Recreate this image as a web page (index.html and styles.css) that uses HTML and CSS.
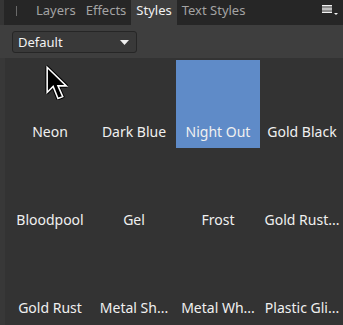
FILE: index.html
```html
<!DOCTYPE html>
<html>
<head>
<meta charset="utf-8">
<link rel="stylesheet" href="styles.css">
</head>
<body>
<div class="panel">
  <div class="tabbar">
    <span class="grip"></span>
    <span class="sep"></span>
    <div class="tabs">
      <span class="tab">Layers</span>
      <span class="tab">Effects</span>
      <span class="tab active">Styles</span>
      <span class="tab">Text Styles</span>
    </div>
    <svg class="menu" width="18" height="12" viewBox="0 0 18 12">
      <rect x="0" y="0" width="10" height="8" fill="#8a8a8a"/>
      <rect x="0" y="0" width="10" height="1" fill="#f2f2f2"/>
      <rect x="0" y="3.5" width="10" height="1" fill="#f2f2f2"/>
      <rect x="0" y="7" width="10" height="1" fill="#f2f2f2"/>
      <path d="M12 8 L16 8 L14 10 Z" fill="#f2f2f2"/>
    </svg>
  </div>
  <div class="toolbar">
    <div class="select">
      <span>Default</span>
      <svg width="9" height="5" viewBox="0 0 9 5"><path d="M0 0 L9 0 L4.5 5 Z" fill="#f0f0f0"/></svg>
    </div>
  </div>
  <div class="gridwrap">
    <div class="grid">
      <div class="cell"><span>Neon</span></div>
      <div class="cell"><span>Dark Blue</span></div>
      <div class="cell selected"><span>Night Out</span></div>
      <div class="cell"><span>Gold Black</span></div>
      <div class="cell"><span>Bloodpool</span></div>
      <div class="cell"><span>Gel</span></div>
      <div class="cell"><span>Frost</span></div>
      <div class="cell"><span>Gold Rust...</span></div>
      <div class="cell"><span>Gold Rust</span></div>
      <div class="cell"><span>Metal Sh...</span></div>
      <div class="cell"><span>Metal Wh...</span></div>
      <div class="cell"><span>Plastic Gli...</span></div>
    </div>
  </div>
  <svg class="cursor" width="24" height="35" viewBox="-1.8 -1.8 20 29">
    <path d="M0 0 L0 21 L5 16 L9 26 L13 24.5 L9 15.5 L16 15.5 Z" fill="none" stroke="#000" stroke-width="3" stroke-linejoin="round"/>
    <path d="M0 0 L0 21 L5 16 L9 26 L13 24.5 L9 15.5 L16 15.5 Z" fill="#000" stroke="#fff" stroke-width="1.3" stroke-linejoin="miter"/>
  </svg>
</div>
</body>
</html>
```

FILE: styles.css
```css
html, body {
  margin: 0;
  padding: 0;
  background: #333333;
  overflow: hidden;
}

.panel {
  position: relative;
  width: 343px;
  height: 325px;
  display: flex;
  flex-direction: column;
  font-family: "Noto Sans", "Open Sans", sans-serif;
  font-size: 13px;
  overflow: hidden;
}

.tabbar {
  height: 25px;
  flex: none;
  display: flex;
  align-items: stretch;
  background: #262626;
}

.grip {
  width: 4px;
  background: #353535;
}

.sep {
  width: 1px;
  height: 10px;
  margin: 6px 0 0 12px;
  background: #6a6a6a;
}

.tabs {
  display: flex;
  margin-left: 14px;
}

.tab {
  padding: 2px 5px 0;
  line-height: 16px;
  color: #a3a3a3;
}

.tab.active {
  background: #3e3e3e;
  color: #f2f2f2;
}

.menu {
  margin: 5px 3px 0 auto;
}

.toolbar {
  height: 33px;
  flex: none;
  background: #3e3e3e;
  display: flex;
  align-items: flex-start;
  padding: 6px 0 0 12px;
  box-sizing: border-box;
}

.select {
  width: 125px;
  height: 22px;
  box-sizing: border-box;
  border: 1px solid #262626;
  border-radius: 3px;
  background: #393939;
  display: flex;
  align-items: center;
  justify-content: space-between;
  padding: 0 7px 0 5px;
  color: #f2f2f2;
  line-height: 16px;
}

.select svg {
  display: block;
}

.gridwrap {
  flex: 1;
  background: #333333;
  border-left: 5px solid #383838;
  padding: 2px 0 0 3px;
  overflow: hidden;
}

.grid {
  display: grid;
  grid-template-columns: repeat(4, 84px);
  grid-auto-rows: 88px;
}

.cell {
  display: flex;
  align-items: flex-end;
  justify-content: center;
  padding-bottom: 8px;
  box-sizing: border-box;
  color: #f0f0f0;
  font-size: 14px;
  line-height: 16px;
  white-space: nowrap;
}

.cell.selected {
  background: #5f8bc8;
}

.cursor {
  position: absolute;
  left: 45px;
  top: 65px;
}
```
